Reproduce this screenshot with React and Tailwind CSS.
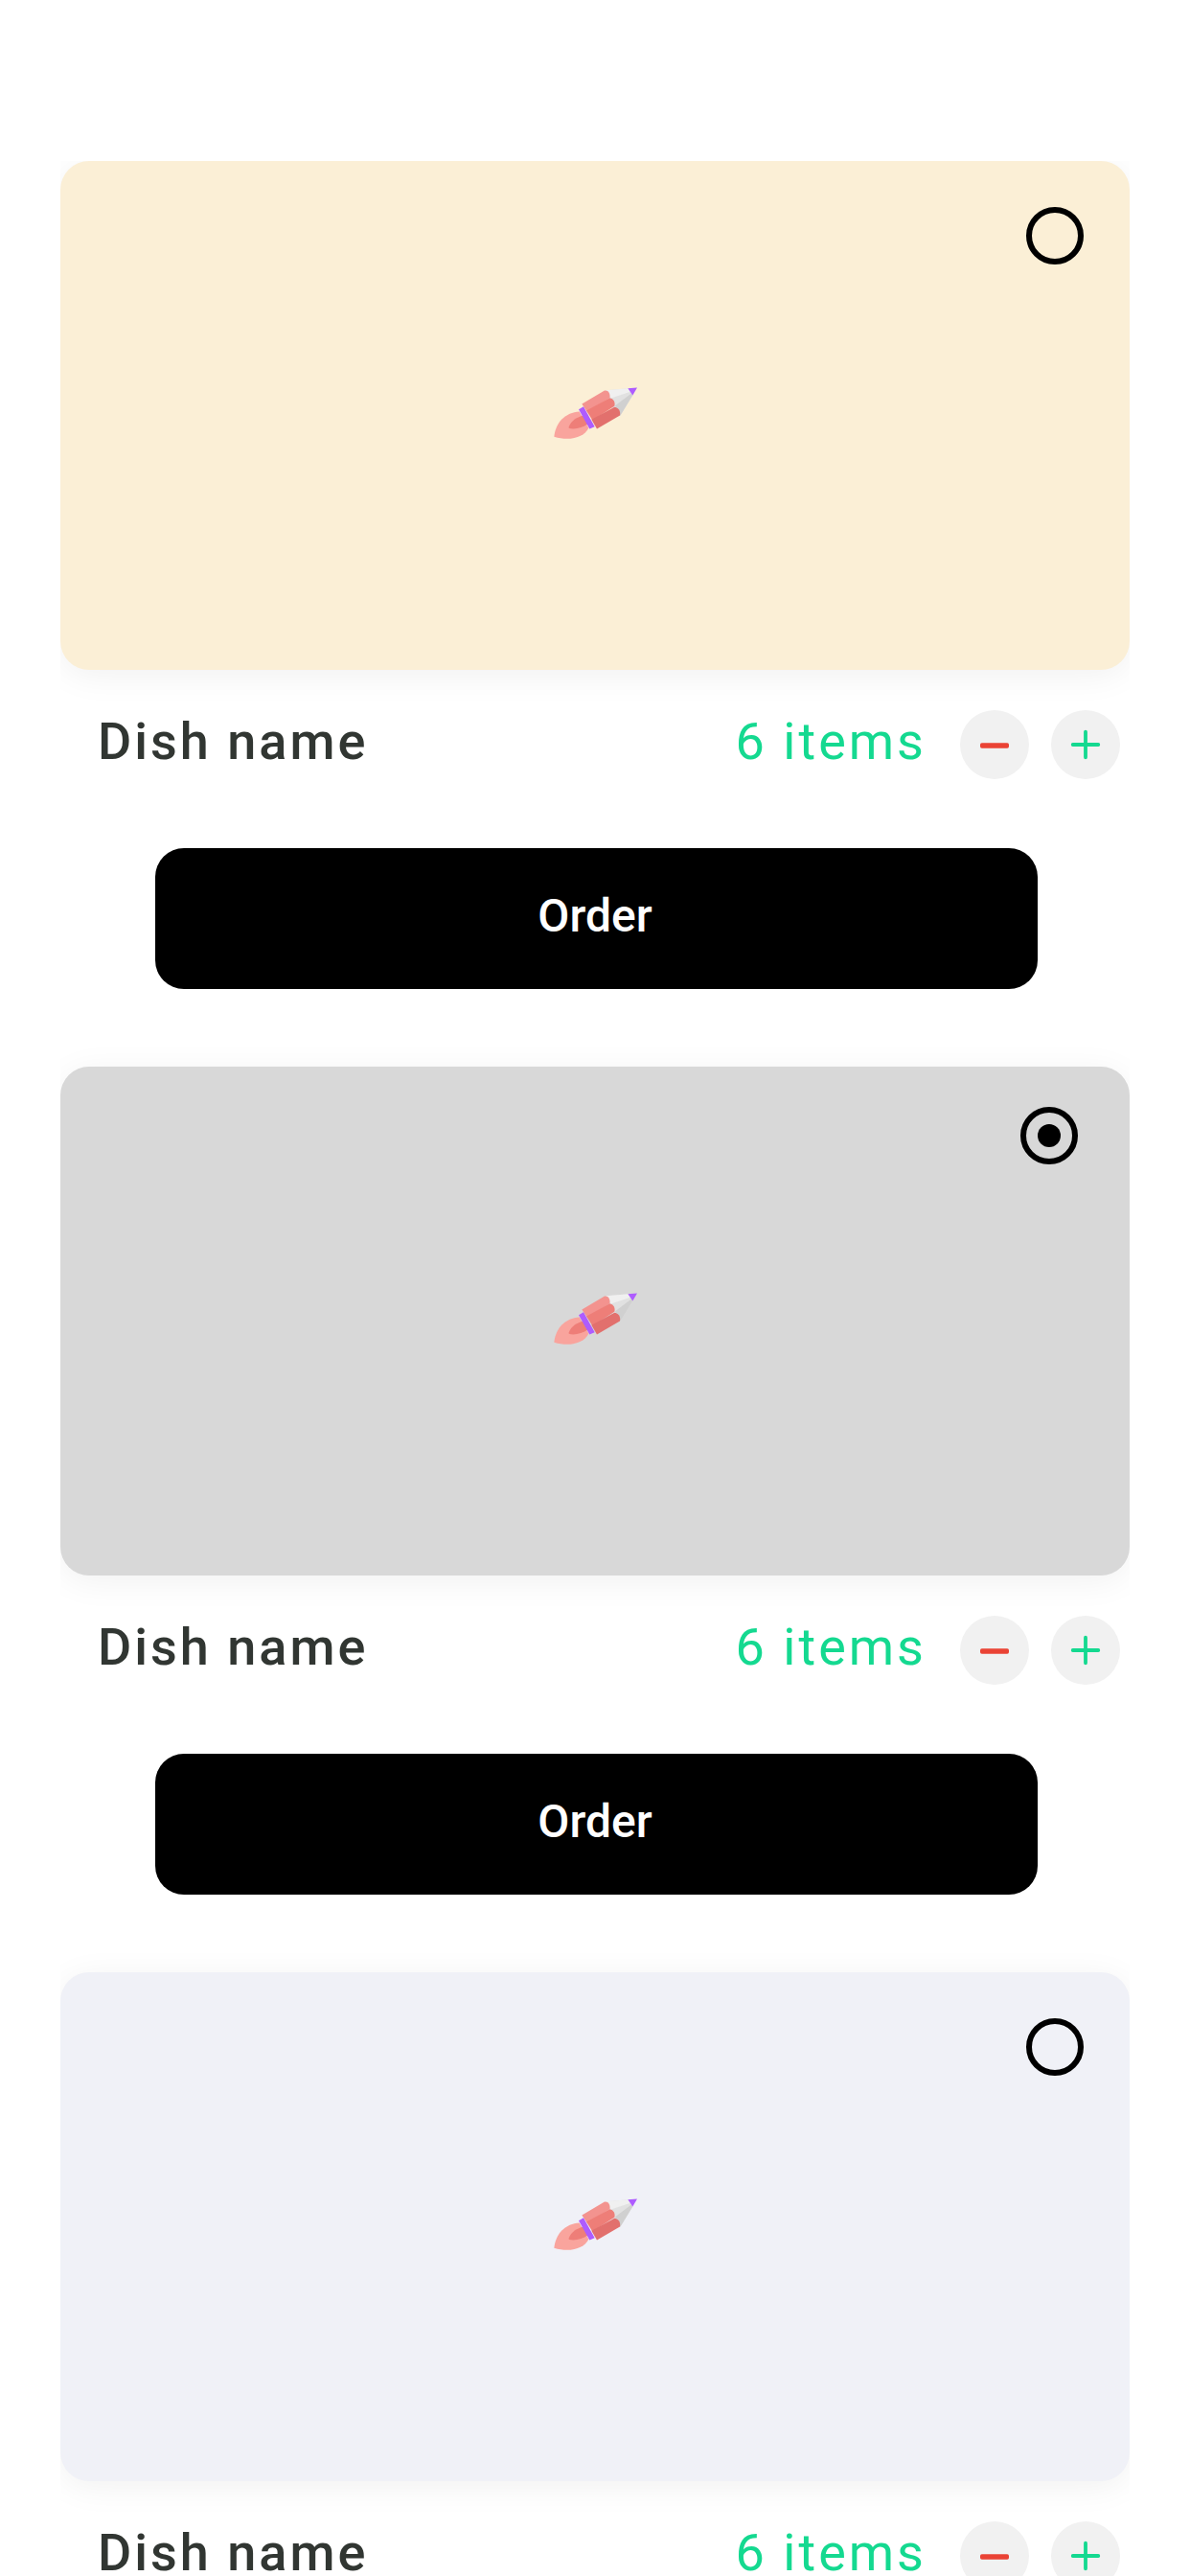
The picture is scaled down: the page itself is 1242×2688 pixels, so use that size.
const dishes = [
  { id: 1, color: "bg-[#fbefd6]", selected: false },
  { id: 2, color: "bg-[#d8d8d8]", selected: true },
  { id: 3, color: "bg-[#f0f1f7]", selected: false },
];

function Rocket() {
  return (
    <svg width="120" height="80" viewBox="3 10.5 360 240" aria-hidden="true">
      <path d="M55 196C59 151 91 119 134 117L163 168C150 197 105 211 55 196Z" fill="#f9a49d" />
      <path d="M101 165C108 145 128 134 146 129L161 156C143 168 119 174 101 169Z" fill="#ee7e78" />
      <path d="M218 50L288 44L301 66L262 130L240 116Z" fill="#e1e1e1" />
      <path d="M218 50L288 44L294 55L233 75Z" fill="#f0f0f0" />
      <path d="M297 60L301 66L262 130L246 98Z" fill="#d0d0d0" />
      <path d="M286 44L315 42L301 66Z" fill="#ae5cff" />
      <path d="M142 93L213 51C224 49 232 60 229 74L158 117Z" fill="#f3938f" />
      <path d="M156 114L229 74C241 76 247 87 244 100L175 144Z" fill="#ee7e78" />
      <path d="M172 142L244 103C256 104 264 116 261 129L189 171Z" fill="#e2706d" />
      <path d="M132 110L147 101L182 164L166 171Z" fill="#ae5cff" />
    </svg>
  );
}

function Radio({ selected }) {
  return selected ? (
    <span className="absolute top-[42px] right-[54px] flex size-[60px] items-center justify-center rounded-full border-6 border-black">
      <span className="size-6 rounded-full bg-black" />
    </span>
  ) : (
    <span className="absolute top-12 right-12 size-[60px] rounded-full border-6 border-black" />
  );
}

function Dish({ color, selected }) {
  return (
    <article className="h-[945px] shrink-0">
      <div
        className={`relative flex h-[531px] items-center justify-center rounded-[30px] shadow-[0_6px_36px_rgba(0,0,0,0.06)] ${color}`}
      >
        <Rocket />
        <Radio selected={selected} />
      </div>
      <div className="flex h-[114px] items-start pt-[42px] pr-[10.5px] pl-[39px]">
        <h2 className="flex-1 text-[54px] leading-[65px] font-medium tracking-[3px] text-[#313632]">Dish name</h2>
        <p className="mr-[35px] text-[54px] leading-[65px] tracking-[3px] text-[#14d990]">6 items</p>
        <button aria-label="Remove one" className="mr-[22.5px] size-[72px] rounded-full bg-[#f1f1f1]">
          <svg width="72" height="72" viewBox="0 0 72 72">
            <rect x="21" y="34.3" width="30" height="5.4" rx="1.8" fill="#ea4335" />
          </svg>
        </button>
        <button aria-label="Add one" className="size-[72px] rounded-full bg-[#f1f1f1]">
          <svg width="72" height="72" viewBox="0 0 72 72">
            <path d="M36 22.7V49.3M22.7 36H49.3" stroke="#14d990" strokeWidth="3.8" strokeLinecap="round" />
          </svg>
        </button>
      </div>
      <button className="mt-[72px] ml-[99px] flex h-[147px] w-[921px] items-center justify-center rounded-[30px] bg-black pr-[3px] pb-[6px] text-[48px] leading-[57px] font-medium text-white">
        Order
      </button>
    </article>
  );
}

export default function App() {
  return (
    <div className="h-[2688px] w-[1242px] overflow-hidden bg-white px-[63px] pt-[168px] font-['Roboto',sans-serif]">
      <main className="flex h-[2520px] flex-col overflow-hidden">
        {dishes.map((dish) => (
          <Dish key={dish.id} color={dish.color} selected={dish.selected} />
        ))}
      </main>
    </div>
  );
}
